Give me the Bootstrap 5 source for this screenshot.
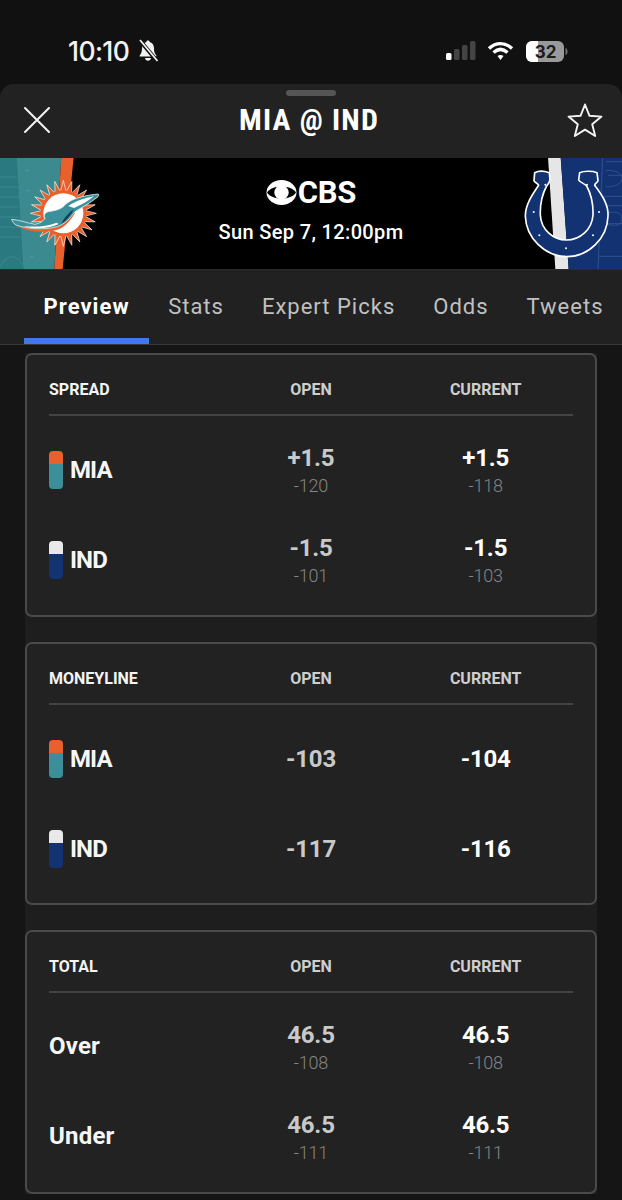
<!DOCTYPE html>
<html lang="en">
<head>
<meta charset="utf-8">
<title>MIA @ IND</title>
<link href="https://cdn.jsdelivr.net/npm/bootstrap@5.3.0/dist/css/bootstrap.min.css" rel="stylesheet">
<style>
html,body{height:1200px;overflow:hidden;background:#111112}
body{font-family:Roboto,"Liberation Sans",sans-serif;color:#fff}
.status-area{height:84px;padding:39px 54px 0 68px;align-items:flex-start}
.clock{font-family:Inter,Roboto,sans-serif;font-size:26.5px;font-weight:500;line-height:22px;letter-spacing:-.6px;color:#f2f2f2}
.status-icons{margin-top:2px}
.bell-icon{margin-left:8px}
.wifi-icon{margin-left:10px}
.batt-icon{margin-left:12px}
.sheet{background:#222;border-radius:14px 14px 0 0;height:1116px;overflow:hidden}
.grabber{width:50px;height:6px;border-radius:4px;background:#555;margin:0 auto}
.sheet-top{height:74px;padding-top:6px}
.sheet-head{height:48px;padding:0 19px 0 23px}
.match-title{font-size:30px;font-weight:700;font-stretch:condensed;letter-spacing:1.2px;line-height:1}
.hero{height:111px;background:#000;overflow:hidden}
.hero-art{display:block;flex:none;width:110px;height:111px}
.hero-mid{padding-top:19px}
.net-logo{font-size:31px;font-weight:700;line-height:1;letter-spacing:-.3px;margin-left:1px}
.game-time{font-size:20px;font-weight:500;line-height:20px;margin-top:14px;letter-spacing:.35px}
.tabstrip{height:76px;background:#212121;border-bottom:1px solid #383838;border-top:1px solid #2c2c2c;padding-left:24px;flex-wrap:nowrap}
.tabstrip .nav-link{color:#c0c0c0;font-size:22px;letter-spacing:1px;padding:0 19px;line-height:74px;height:74px;border-radius:0;white-space:nowrap}
.tabstrip .nav-link.active{color:#fff;font-weight:700;letter-spacing:1.05px;padding:0 19.5px;border-bottom:6px solid #3f79f2}
.board{height:855px;background:#151515;padding:8px 25px 0}
.board-inner{background:#1e1e1e;display:flex;flex-direction:column;gap:25px}
.odds-box{background:#222;border:2px solid #4a4a4a;border-radius:7px;height:263.5px;padding:0 22px}
.odds-head{height:61px;border-bottom:2px solid #444;align-items:center;padding-top:11px;margin:0 0 9px}
.odds-head>div{padding:0;font-size:16px;font-weight:700;color:#cfcfcf;line-height:1}
.odds-head>div:first-child{color:#f4f4f4}
.odds-row{height:90px;margin:0;align-items:center}
.odds-row>div{padding:0}
.team-name{font-size:24px;font-weight:700;line-height:1;color:#f6f6f6;letter-spacing:.2px}
.team-abbr{letter-spacing:-.9px}
.chip{display:flex;flex-direction:column;width:14px;height:38px;border-radius:4px;overflow:hidden;margin-right:7px}
.chip-a{height:13px}.chip-b{flex:1}
.c-orange{background:#e8602c}.c-teal{background:#3c8f98}.c-white{background:#e9e9e9}.c-navy{background:#123272}
.val{font-size:24px;font-weight:700;line-height:1;color:#c9c9c9;letter-spacing:-.2px}
.val.now{color:#fff}
.val-stack{padding-top:3px}
.sub{font-size:18px;font-weight:300;line-height:1;color:#858585;margin-top:7px;letter-spacing:-.2px}
</style>
</head>
<body>
<div class="status-area d-flex justify-content-between">
  <div class="d-flex align-items-center">
    <span class="clock">10:10</span>
    <svg class="bell-icon" width="22" height="24" viewBox="0 0 22 24"><path d="M11 1.500c1 0 1.600.6 1.700 1.600 3 .8 4.300 3.200 4.300 6.400 0 3.300.7 5 2.300 6.900.4.600 0 1.100-.6 1.100H3.300c-.6 0-1-.5-.6-1.100C4.300 14.500 5 12.800 5 9.500c0-3.200 1.300-5.600 4.300-6.400.1-1 .7-1.600 1.700-1.600z" fill="#f2f2f2"/><path d="M8 19h6c-.3 1.800-1.500 2.800-3 2.800S8.300 20.800 8 19z" fill="#f2f2f2"/><path d="M2.500 1 20 22" stroke="#111" stroke-width="4"/><path d="M3 1l17.500 21" stroke="#f2f2f2" stroke-width="1.800"/></svg>
  </div>
  <div class="d-flex align-items-start status-icons">
    <svg width="31" height="20" viewBox="0 0 31 20"><rect x="0" y="12" width="5.500" height="7" rx="1.500" fill="#fff"/><rect x="8" y="8" width="5.500" height="11" rx="1.500" fill="#444"/><rect x="16" y="4" width="5.500" height="15" rx="1.500" fill="#444"/><rect x="24" y="0" width="5.500" height="19" rx="1.500" fill="#444"/></svg>
    <svg class="wifi-icon" width="27" height="20" viewBox="0 0 27 20"><path d="M2 7.500C9 1 18 1 25 7.500" fill="none" stroke="#fff" stroke-width="3.400"/><path d="M6.500 11.500c4.500-4 9.500-4 14 0" fill="none" stroke="#fff" stroke-width="3.400"/><path d="M10.500 15c1.800-1.500 4.200-1.500 6 0l-3 4z" fill="#fff"/></svg>
    <svg class="batt-icon" width="42" height="22" viewBox="0 0 42 22"><rect x="0" y="0" width="38" height="21" rx="6" fill="#9a9a9a"/><path d="M6 0h6v21H6a6 6 0 0 1-6-6V6a6 6 0 0 1 6-6z" fill="#fff"/><path d="M39.500 7c1.500.5 2 2 2 3.500s-.5 3-2 3.500z" fill="#777"/><text x="19.500" y="17" text-anchor="middle" font-family="Inter,Roboto,sans-serif" font-size="17" font-weight="700" fill="#1c1c1c">32</text></svg>
  </div>
</div>

<div class="sheet">
  <div class="sheet-top">
    <div class="grabber"></div>
    <div class="sheet-head d-flex justify-content-between align-items-center">
      <svg width="28" height="28" viewBox="0 0 28 28"><path d="M2 2l24 24M26 2L2 26" stroke="#f4f4f4" stroke-width="2" stroke-linecap="round"/></svg>
      <div class="match-title">MIA @ IND</div>
      <svg width="36" height="36" viewBox="0 0 36 36"><path d="M18 2.500l4.500 11.300 12 .8-9.300 7.700 3 11.700L18 27.600 7.800 34l3-11.700L1.500 14.600l12-.8z" fill="none" stroke="#f4f4f4" stroke-width="1.900" stroke-linejoin="round"/></svg>
    </div>
  </div>

  <div class="hero d-flex justify-content-between align-items-stretch">
    <svg class="hero-art" viewBox="0 3 330 333">
      <defs><path id="ray" d="M181 106 L190 70 L199 106 Z"/></defs>
      <polygon points="0,0 184,0 163,336 0,336" fill="#3b8a90"/>
      <polygon points="0,0 52,0 72,336 0,336" fill="#2c7a80"/>
      <g stroke="#4c9ba1" stroke-width="2" fill="none" opacity=".7">
        <path d="M0 60H52M0 90H55M0 120H57M0 150H59M0 180H61M0 210H63M0 240H64"/>
        <path d="M52 0L72 336"/>
        <path d="M0 330c20-40 50-40 68-6"/>
        <path d="M75 40h12M80 100h10M82 200h10M88 300h12" stroke="#6fb3b7"/>
      </g>
      <polygon points="184,0 221,0 188,336 163,336" fill="#e8602c"/>
      <g fill="#e8602c" stroke="#fff" stroke-width="1.800" stroke-linejoin="round">
        <use href="#ray" transform="rotate(0 190 169)"/><use href="#ray" transform="rotate(15 190 169)"/><use href="#ray" transform="rotate(30 190 169)"/><use href="#ray" transform="rotate(45 190 169)"/><use href="#ray" transform="rotate(60 190 169)"/><use href="#ray" transform="rotate(75 190 169)"/><use href="#ray" transform="rotate(90 190 169)"/><use href="#ray" transform="rotate(105 190 169)"/><use href="#ray" transform="rotate(120 190 169)"/><use href="#ray" transform="rotate(135 190 169)"/><use href="#ray" transform="rotate(150 190 169)"/><use href="#ray" transform="rotate(165 190 169)"/><use href="#ray" transform="rotate(180 190 169)"/><use href="#ray" transform="rotate(195 190 169)"/><use href="#ray" transform="rotate(210 190 169)"/><use href="#ray" transform="rotate(225 190 169)"/><use href="#ray" transform="rotate(240 190 169)"/><use href="#ray" transform="rotate(255 190 169)"/><use href="#ray" transform="rotate(270 190 169)"/><use href="#ray" transform="rotate(285 190 169)"/><use href="#ray" transform="rotate(300 190 169)"/><use href="#ray" transform="rotate(315 190 169)"/><use href="#ray" transform="rotate(330 190 169)"/><use href="#ray" transform="rotate(345 190 169)"/>
      </g>
      <circle cx="190" cy="169" r="69" fill="#e8602c"/>
      <circle cx="190" cy="169" r="60" fill="#fff"/>
      <g transform="translate(0 39)">
        <path d="M50 167C85 188 140 190 178 177 198 168 212 150 226 128L205 132C190 155 165 170 130 173 100 176 75 172 50 167Z" fill="#e8602c"/>
        <path d="M35 148C60 150 85 160 105 163 120 160 128 155 135 145 130 135 135 128 145 125 165 122 180 118 190 110 205 92 235 78 295 72 297 74 296 78 294 80 270 100 245 112 225 125 210 145 195 162 172 170 140 180 80 178 48 165 40 160 37 154 35 148Z" fill="#3b919b" stroke="#dfe9ea" stroke-width="2.500" stroke-linejoin="round"/>
        <path d="M205 108C228 92 255 84 282 79 262 96 240 106 222 114Z" fill="#fff"/>
        <path d="M190 150C198 138 210 125 222 118 212 136 200 152 184 162Z" fill="#123f55"/>
        <path d="M70 168C105 172 140 170 170 158L176 162C142 178 100 178 70 168Z" fill="#fff"/>
      </g>
    </svg>

    <div class="hero-mid d-flex flex-column align-items-center flex-grow-1">
      <div class="d-flex align-items-center">
        <svg width="31" height="25" viewBox="0 0 31 25"><ellipse cx="15.500" cy="12.500" rx="15" ry="12.500" fill="#fff"/><path d="M1 12.500C6 4.500 25 4.500 30 12.500 25 20.500 6 20.500 1 12.500z" fill="#000"/><circle cx="15.500" cy="12.500" r="7.200" fill="#fff"/></svg>
        <span class="net-logo">CBS</span>
      </div>
      <div class="game-time">Sun Sep 7, 12:00pm</div>
    </div>

    <svg class="hero-art" viewBox="0 3 330 333">
      <polygon points="108,0 146,0 170,336 130,336" fill="#e6e6e6"/>
      <polygon points="146,0 330,0 330,336 170,336" fill="#123272"/>
      <g fill="none" stroke="#3a5590" stroke-width="2.500">
        <path d="M272 0L258 336"/>
        <path d="M282 14h48M282 40c30 0 48 8 48 24s-20 26-48 26M330 118h-52l-3 60M276 146h54M274 200h56M262 298h68"/>
        <path d="M288 55h42M285 170c14-8 45-8 45 16s-34 22-46 12"/>
      </g>
      <g transform="translate(0 9)">
        <path d="M68 38C80 32 100 34 112 38L114 60C112 68 108 72 104 78 92 100 84 135 85 165 87 210 125 240 163 240 205 240 240 208 243 165 244 135 236 100 224 78 218 70 204 68 200 60L203 38C215 33 240 32 255 38L258 62C256 68 248 70 248 76 270 105 290 135 288 168 286 235 230 290 165 290 100 290 42 235 40 168 40 135 60 105 80 76 78 70 68 68 66 62Z" fill="#123272" stroke="#fff" stroke-width="5" stroke-linejoin="round"/>
        <g fill="#fff"><circle cx="100" cy="74" r="3"/><circle cx="225" cy="74" r="3"/><circle cx="65" cy="156" r="3"/><circle cx="261" cy="156" r="3"/><circle cx="82" cy="226" r="3"/><circle cx="243" cy="226" r="3"/><circle cx="162" cy="265" r="3"/></g>
      </g>
    </svg>
  </div>

  <nav class="nav tabstrip">
    <a class="nav-link active" href="#">Preview</a>
    <a class="nav-link" href="#">Stats</a>
    <a class="nav-link" href="#">Expert Picks</a>
    <a class="nav-link" href="#">Odds</a>
    <a class="nav-link" href="#">Tweets</a>
  </nav>

  <div class="board">
    <div class="board-inner">
      <section class="odds-box">
        <div class="row odds-head"><div class="col-4">SPREAD</div><div class="col-4 text-center">OPEN</div><div class="col-4 text-center">CURRENT</div></div>
        <div class="row odds-row">
          <div class="col-4 d-flex align-items-center"><span class="chip"><span class="chip-a c-orange"></span><span class="chip-b c-teal"></span></span><span class="team-name team-abbr">MIA</span></div>
          <div class="col-4 text-center val-stack"><div class="val">+1.5</div><div class="sub">-120</div></div>
          <div class="col-4 text-center val-stack"><div class="val now">+1.5</div><div class="sub">-118</div></div>
        </div>
        <div class="row odds-row">
          <div class="col-4 d-flex align-items-center"><span class="chip"><span class="chip-a c-white"></span><span class="chip-b c-navy"></span></span><span class="team-name team-abbr">IND</span></div>
          <div class="col-4 text-center val-stack"><div class="val">-1.5</div><div class="sub">-101</div></div>
          <div class="col-4 text-center val-stack"><div class="val now">-1.5</div><div class="sub">-103</div></div>
        </div>
      </section>
      <section class="odds-box">
        <div class="row odds-head"><div class="col-4">MONEYLINE</div><div class="col-4 text-center">OPEN</div><div class="col-4 text-center">CURRENT</div></div>
        <div class="row odds-row">
          <div class="col-4 d-flex align-items-center"><span class="chip"><span class="chip-a c-orange"></span><span class="chip-b c-teal"></span></span><span class="team-name team-abbr">MIA</span></div>
          <div class="col-4 text-center"><div class="val">-103</div></div>
          <div class="col-4 text-center"><div class="val now">-104</div></div>
        </div>
        <div class="row odds-row">
          <div class="col-4 d-flex align-items-center"><span class="chip"><span class="chip-a c-white"></span><span class="chip-b c-navy"></span></span><span class="team-name team-abbr">IND</span></div>
          <div class="col-4 text-center"><div class="val">-117</div></div>
          <div class="col-4 text-center"><div class="val now">-116</div></div>
        </div>
      </section>
      <section class="odds-box">
        <div class="row odds-head"><div class="col-4">TOTAL</div><div class="col-4 text-center">OPEN</div><div class="col-4 text-center">CURRENT</div></div>
        <div class="row odds-row">
          <div class="col-4"><span class="team-name">Over</span></div>
          <div class="col-4 text-center val-stack"><div class="val">46.5</div><div class="sub">-108</div></div>
          <div class="col-4 text-center val-stack"><div class="val now">46.5</div><div class="sub">-108</div></div>
        </div>
        <div class="row odds-row">
          <div class="col-4"><span class="team-name">Under</span></div>
          <div class="col-4 text-center val-stack"><div class="val">46.5</div><div class="sub">-111</div></div>
          <div class="col-4 text-center val-stack"><div class="val now">46.5</div><div class="sub">-111</div></div>
        </div>
      </section>
    </div>
  </div>
</div>
</body>
</html>
